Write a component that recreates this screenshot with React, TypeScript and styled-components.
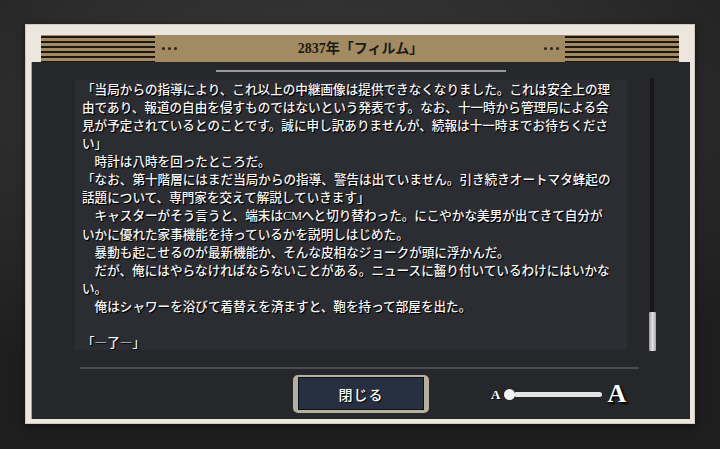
import React from "react";
import styled, { createGlobalStyle } from "styled-components";

const GlobalStyle = createGlobalStyle`
  html, body { margin: 0; padding: 0; }
  body { width: 720px; height: 449px; overflow: hidden; background: #262626; }
`;

const Page = styled.div`
  width: 720px;
  height: 449px;
  box-sizing: border-box;
  padding: 24px 0 0 25px;
  background: radial-gradient(ellipse 75% 65% at 45% 25%, #3a3a3a 0%, #2d2d2d 55%, #1e1e1e 100%);
`;

const Frame = styled.div`
  width: 670px;
  height: 400px;
  box-sizing: border-box;
  background: #ebe7df;
  border: 1px solid #cfcac0;
  padding: 10px 4px 4px 5px;
  display: flex;
  flex-direction: column;
  box-shadow: 0 2px 8px rgba(0, 0, 0, 0.55);
`;

const Header = styled.div`
  height: 27px;
  flex: none;
  margin: 0 11px 0 10px;
  background: #a28a62;
  display: flex;
  align-items: center;
`;

const Stripes = styled.div`
  width: 114px;
  align-self: stretch;
  background: repeating-linear-gradient(
    to bottom,
    #a28a62 0px,
    #a28a62 1px,
    #1d1912 1px,
    #1d1912 3.5px,
    #a28a62 3.5px,
    #a28a62 5px
  );
`;

const Dots = styled.div<{ $side: "left" | "right" }>`
  display: flex;
  gap: 3px;
  margin: ${(p) => (p.$side === "left" ? "0 0 0 7px" : "0 6px 0 0")};
`;

const Dot = styled.span`
  width: 3px;
  height: 3px;
  border-radius: 50%;
  background: #2a2218;
`;

const Title = styled.div`
  flex: 1;
  text-align: center;
  font-family: "Liberation Serif", "Noto Sans CJK JP", serif;
  font-size: 14px;
  font-weight: 700;
  color: #1f1a12;
  line-height: 27px;
`;

const Panel = styled.div`
  flex: 1;
  background: #26272b;
  border-left: 1px solid #a9a59d;
  display: flex;
  flex-direction: column;
`;

const TitleRule = styled.div`
  width: 290px;
  height: 2px;
  margin: 8px auto 0;
  background: #9a9a9a;
`;

const Body = styled.div`
  display: flex;
  align-items: flex-start;
  margin-top: 6px;
  padding-left: 43px;
`;

const TextBox = styled.div`
  width: 552px;
  height: 270px;
  margin-top: 2px;
  box-sizing: border-box;
  padding: 0 0 0 7px;
  background: #2c2d32;
  overflow: hidden;
  font-family: "Noto Sans CJK JP", sans-serif;
  font-size: 12.6px;
  font-weight: 500;
  line-height: 18px;
  color: #f6f6f6;
  white-space: nowrap;
  text-shadow: 1px 1px 1px #000, 1px 1px 0 #000;
`;

const Para = styled.p`
  margin: 0;
`;

const Latin = styled.span`
  font-family: "Liberation Serif", serif;
  letter-spacing: -0.5px;
`;

const ScrollTrack = styled.div`
  width: 7px;
  height: 273px;
  margin-left: 22px;
  display: flex;
  flex-direction: column;
  justify-content: flex-end;
  background: linear-gradient(to right, transparent 1px, #17171a 1px, #17171a 5px, transparent 5px);
`;

const ScrollThumb = styled.div`
  height: 39px;
  border-radius: 1px;
  background: linear-gradient(to right, #9c9c9c, #e2e2e2 50%, #a4a4a4);
`;

const Divider = styled.div`
  width: 559px;
  height: 2px;
  margin: 16px 0 0 48px;
  background: #4a4a52;
`;

const Footer = styled.div`
  margin-top: 6px;
  height: 38px;
  display: grid;
  grid-template-columns: 1fr auto 1fr;
  align-items: center;
`;

const CloseButton = styled.button`
  grid-column: 2;
  width: 136px;
  height: 38px;
  box-sizing: border-box;
  border-style: solid;
  border-color: #b7af9f;
  border-width: 2px 5px 3px 5px;
  border-radius: 5px;
  background: #263041;
  box-shadow: inset 0 0 0 1px #0f1218;
  color: #fff;
  font-family: "Noto Sans CJK JP", sans-serif;
  font-size: 14px;
  font-weight: 500;
  letter-spacing: 1px;
  text-shadow: 1px 1px 1px #000;
  padding: 0;
  cursor: pointer;
`;

const SizeControl = styled.div`
  grid-column: 3;
  display: flex;
  align-items: center;
  padding-left: 62px;
`;

const LetterA = styled.span<{ $big?: boolean }>`
  font-family: "Liberation Serif", serif;
  font-weight: 700;
  color: #fff;
  font-size: ${(p) => (p.$big ? "26px" : "13px")};
  line-height: 1;
  margin-left: ${(p) => (p.$big ? "5px" : "0")};
  text-shadow: ${(p) => (p.$big ? "1px 1px 1px #000, 2px 2px 2px #000" : "1px 1px 1px #000")};
`;

const Slider = styled.div`
  display: flex;
  align-items: center;
  margin-left: 4px;
`;

const Knob = styled.span`
  width: 11px;
  height: 11px;
  border-radius: 50%;
  background: #f2f2f2;
  position: relative;
  z-index: 1;
`;

const Rail = styled.span`
  width: 88px;
  height: 5px;
  margin-left: -1px;
  border-radius: 3px;
  background: #e4e4e4;
`;

const IDEO_SPACE = "\u3000";

const lines: React.ReactNode[][] = [
  [
    "「当局からの指導により、これ以上の中継画像は提供できなくなりました。これは安全上の理",
    "由であり、報道の自由を侵すものではないという発表です。なお、十一時から管理局による会",
    "見が予定されているとのことです。誠に申し訳ありませんが、続報は十一時までお待ちくださ",
    "い」",
  ],
  [IDEO_SPACE + "時計は八時を回ったところだ。"],
  [
    "「なお、第十階層にはまだ当局からの指導、警告は出ていません。引き続きオートマタ蜂起の",
    "話題について、専門家を交えて解説していきます」",
  ],
  [
    <>
      {IDEO_SPACE + "キャスターがそう言うと、端末は"}
      <Latin>CM</Latin>
      {"へと切り替わった。にこやかな美男が出てきて自分が"}
    </>,
    "いかに優れた家事機能を持っているかを説明しはじめた。",
  ],
  [IDEO_SPACE + "暴動も起こせるのが最新機能か、そんな皮相なジョークが頭に浮かんだ。"],
  [
    IDEO_SPACE + "だが、俺にはやらなければならないことがある。ニュースに齧り付いているわけにはいかな",
    "い。",
  ],
  [IDEO_SPACE + "俺はシャワーを浴びて着替えを済ますと、鞄を持って部屋を出た。"],
  ["\u00a0"],
  ["「―了―」"],
];

export default function App() {
  return (
    <>
      <GlobalStyle />
      <Page>
        <Frame>
          <Header>
            <Stripes />
            <Dots $side="left">
              <Dot />
              <Dot />
              <Dot />
            </Dots>
            <Title>2837年「フィルム」</Title>
            <Dots $side="right">
              <Dot />
              <Dot />
              <Dot />
            </Dots>
            <Stripes />
          </Header>
          <Panel>
            <TitleRule />
            <Body>
              <TextBox>
                {lines.map((para, i) => (
                  <Para key={i}>
                    {para.map((l, j) => (
                      <React.Fragment key={j}>
                        {j > 0 && <br />}
                        {l}
                      </React.Fragment>
                    ))}
                  </Para>
                ))}
              </TextBox>
              <ScrollTrack>
                <ScrollThumb />
              </ScrollTrack>
            </Body>
            <Divider />
            <Footer>
              <CloseButton>閉じる</CloseButton>
              <SizeControl>
                <LetterA>A</LetterA>
                <Slider>
                  <Knob />
                  <Rail />
                </Slider>
                <LetterA $big>A</LetterA>
              </SizeControl>
            </Footer>
          </Panel>
        </Frame>
      </Page>
    </>
  );
}
